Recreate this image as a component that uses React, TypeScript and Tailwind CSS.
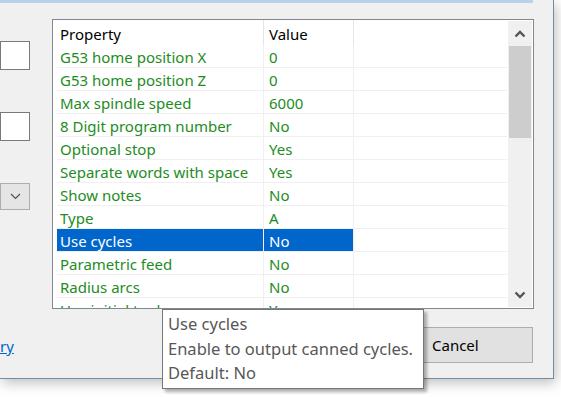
import React from "react";

const rows: [string, string][] = [
  ["G53 home position X", "0"],
  ["G53 home position Z", "0"],
  ["Max spindle speed", "6000"],
  ["8 Digit program number", "No"],
  ["Optional stop", "Yes"],
  ["Separate words with space", "Yes"],
  ["Show notes", "No"],
  ["Type", "A"],
  ["Use cycles", "No"],
  ["Parametric feed", "No"],
  ["Radius arcs", "No"],
  ["Use initial tool", "Yes"],
];

const font = { fontFamily: '"Noto Sans", "Open Sans", sans-serif' };

function Chevron({ up }: { up?: boolean }) {
  return (
    <svg width="12" height="8" viewBox="0 0 12 8">
      <path
        d={up ? "M1.5 6.5 L6 2 L10.5 6.5" : "M1.5 1.5 L6 6 L10.5 1.5"}
        fill="none"
        stroke="#555555"
        strokeWidth="2.4"
      />
    </svg>
  );
}

export default function App() {
  return (
    <div className="relative w-[561px] h-[399px] bg-white overflow-hidden text-[15px] leading-none" style={font}>
      <div className="w-[554px] h-[379px] bg-[#f0f0f0] border-r border-b border-[#6f8ea6] shadow-[2px_4px_12px_rgba(0,0,0,0.25)] flex flex-col">
        <div className="h-[3px] w-[533px] bg-[#b9d1ea]" />
        <div className="flex pt-[16px]">
          <div className="w-[52px] flex flex-col pt-[22px]">
            <div className="w-[30px] h-[29px] bg-white border border-[#7a7a7a]" />
            <div className="w-[30px] h-[29px] bg-white border border-[#7a7a7a] mt-[42px]" />
            <div className="w-[30px] h-[27px] bg-[#e5e5e5] border border-[#adadad] mt-[42px] flex items-center justify-start pl-[9px]">
              <svg width="11" height="7" viewBox="0 0 11 7">
                <path d="M1 1 L5.5 5.5 L10 1" fill="none" stroke="#505050" strokeWidth="1.2" />
              </svg>
            </div>
          </div>
          <div className="w-[482px] h-[290px] bg-white border border-[#828790] flex overflow-hidden">
            <div className="flex-1 flex flex-col">
              <div className="h-[25px] flex shrink-0 text-black">
                <div className="w-[211px] pl-[7px] pt-[7px] border-r border-[#e5e5e5]">Property</div>
                <div className="w-[90px] pl-[5px] pt-[7px] border-r border-[#e5e5e5]">Value</div>
                <div className="flex-1" />
              </div>
              {rows.map(([k, v]) => {
                const sel = k === "Use cycles";
                return (
                  <div key={k} className="h-[23px] shrink-0 flex ml-[4px] mr-[1px] border-b border-[#f0f0f0]">
                    <div className={`w-[207px] pl-[3px] pt-[5px] border-r ${sel ? "bg-[#0066cc] text-white border-[#f0f0f0]" : "text-[#1e8c1e] border-[#f0f0f0]"}`}>
                      {k}
                    </div>
                    <div className={`w-[90px] pl-[5px] pt-[5px] border-r border-[#f0f0f0] ${sel ? "bg-[#0066cc] text-white" : "text-[#1e8c1e]"}`}>
                      {v}
                    </div>
                    <div className="flex-1" />
                  </div>
                );
              })}
            </div>
            <div className="w-[24px] my-[1px] mr-[1px] bg-[#f0f0f0] flex flex-col">
              <div className="h-[25px] flex items-center justify-center">
                <Chevron up />
              </div>
              <div className="mx-[1px] h-[92px] bg-[#cdcdcd]" />
              <div className="flex-1" />
              <div className="h-[25px] flex items-center justify-center">
                <Chevron />
              </div>
            </div>
          </div>
        </div>
        <div className="flex items-start pt-[18px]">
          <div className="w-[420px] pt-[12px]">
            <span className="text-[#0066cc] underline">ry</span>
          </div>
          <div className="w-[113px] h-[36px] bg-[#e1e1e1] border border-[#adadad] flex items-center pl-[11px] text-black">
            Cancel
          </div>
        </div>
      </div>
      <div className="absolute left-[162px] top-[309px] w-[262px] h-[80px] bg-white border border-[#767676] shadow-[3px_3px_3px_rgba(0,0,0,0.3)] text-[#575757] text-[16.5px] pl-[5px] pt-[6px] flex flex-col gap-[8px]">
        <div>Use cycles</div>
        <div>Enable to output canned cycles.</div>
        <div>Default: No</div>
      </div>
    </div>
  );
}
